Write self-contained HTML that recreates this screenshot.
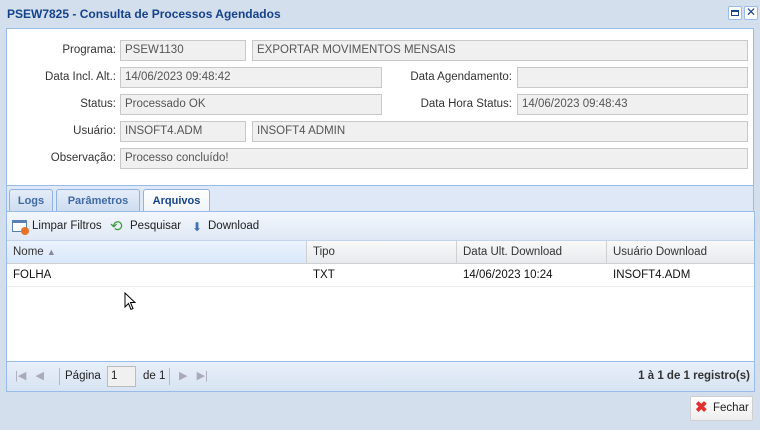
<!DOCTYPE html>
<html><head><meta charset="utf-8"><style>
*{box-sizing:border-box;margin:0;padding:0}
body{width:760px;height:430px;overflow:hidden;background:#d3dfec;font-family:"Liberation Sans",sans-serif;font-size:11.5px;color:#222;position:relative}
.a{position:absolute}
.title{left:7px;top:7px;font-weight:bold;color:#15428b;font-size:12px}
.tb{width:14px;height:14px;border:1px solid #99bbe8;background:#fff;border-radius:2px;top:6px}
.form{left:6px;top:28px;width:748px;height:157px;background:#fff;border:1px solid #99bbe8;border-bottom:none}
.lbl{text-align:right;color:#333}
.in{background:#f0f0f0;border:1px solid #c8c8c8;height:21px;padding:3px 4px;color:#555;white-space:nowrap;overflow:hidden}
.tabs{left:6px;top:185px;width:748px;height:27px;background:#dfe8f6;border:1px solid #99bbe8}
.tab{top:3px;height:23px;border:1px solid #8db2e3;border-bottom:none;border-radius:3px 3px 0 0;background:linear-gradient(#e5edf8,#cddcf0);font-weight:bold;color:#416aa3;padding:5px 0 0;text-align:center;font-size:11px}
.tab.act{background:linear-gradient(#fff,#eef3fa);color:#15428b;height:24px}
.grid{left:6px;top:211px;width:749px;height:181px;background:#fff;border:1px solid #99bbe8}
.tool{left:0;top:0;width:747px;height:29px;background:linear-gradient(#f3f7fc,#dfe8f5);border-bottom:1px solid #c3d5ee}
.hd{top:29px;height:23px;background:linear-gradient(#f9f9f9,#e7eaee);border-bottom:1px solid #d0d0d0;padding:5px 6px;border-right:1px solid #d0d0d0;color:#333}
.cell{top:53px;height:22px;padding:4px 6px;color:#111}
.pg{left:0;top:149px;width:747px;height:30px;background:linear-gradient(#e8eff8,#d8e4f3);border-top:1px solid #99bbe8}
</style></head><body>
<div class="a title">PSEW7825 - Consulta de Processos Agendados</div>
<div class="a tb" style="left:728px"><div style="margin:3px 2px;width:8px;height:6px;border:1px solid #15428b;border-top-width:2px"></div></div>
<div class="a tb" style="left:744px;font-size:12px;line-height:11px;text-align:center;color:#15428b">✕</div>
<div class="a form"></div>
<div class="a lbl" style="left:10px;top:44px;width:106px">Programa:</div>
<div class="a in" style="left:120px;top:40px;width:126px">PSEW1130</div>
<div class="a in" style="left:252px;top:40px;width:496px">EXPORTAR MOVIMENTOS MENSAIS</div>
<div class="a lbl" style="left:10px;top:71px;width:106px">Data Incl. Alt.:</div>
<div class="a in" style="left:120px;top:67px;width:262px">14/06/2023 09:48:42</div>
<div class="a lbl" style="left:390px;top:71px;width:122px">Data Agendamento:</div>
<div class="a in" style="left:517px;top:67px;width:231px"></div>
<div class="a lbl" style="left:10px;top:98px;width:106px">Status:</div>
<div class="a in" style="left:120px;top:94px;width:262px">Processado OK</div>
<div class="a lbl" style="left:390px;top:98px;width:122px">Data Hora Status:</div>
<div class="a in" style="left:517px;top:94px;width:231px">14/06/2023 09:48:43</div>
<div class="a lbl" style="left:10px;top:125px;width:106px">Usuário:</div>
<div class="a in" style="left:120px;top:121px;width:126px">INSOFT4.ADM</div>
<div class="a in" style="left:252px;top:121px;width:496px">INSOFT4 ADMIN</div>
<div class="a lbl" style="left:10px;top:152px;width:106px">Observação:</div>
<div class="a in" style="left:120px;top:148px;width:628px">Processo concluído!</div>
<div class="a tabs">
<div class="a tab" style="left:2px;width:44px">Logs</div>
<div class="a tab" style="left:49px;width:84px">Parâmetros</div>
<div class="a tab act" style="left:136px;width:67px">Arquivos</div>
</div>
<div class="a grid">
<div class="a tool">
<div class="a" style="left:5px;top:8px;width:15px;height:12px;border:1px solid #5a7fb5;border-top-width:3px;background:#fff"></div>
<div class="a" style="left:14px;top:15px;width:8px;height:8px;border-radius:50%;background:#e8702a"></div>
<div class="a" style="left:25px;top:8px">Limpar Filtros</div>
<div class="a" style="left:103px;top:5px;color:#3a9a3a;font-size:15px">⟲</div>
<div class="a" style="left:123px;top:8px">Pesquisar</div>
<div class="a" style="left:185px;top:8px;color:#3d6fb6;font-size:12px">⬇</div>
<div class="a" style="left:201px;top:8px">Download</div>
</div>
<div class="a hd" style="left:0;width:300px;background:linear-gradient(#ebf3fd,#d9e8fb)">Nome <span style="color:#889;font-size:9px">▲</span></div>
<div class="a hd" style="left:300px;width:150px">Tipo</div>
<div class="a hd" style="left:450px;width:150px">Data Ult. Download</div>
<div class="a hd" style="left:600px;width:147px;border-right:none">Usuário Download</div>
<div class="a" style="left:0;top:53px;width:747px;height:22px;border-bottom:1px solid #ededed"></div>
<div class="a cell" style="left:0">FOLHA</div>
<div class="a cell" style="left:300px">TXT</div>
<div class="a cell" style="left:450px">14/06/2023 10:24</div>
<div class="a cell" style="left:600px">INSOFT4.ADM</div>
<div class="a pg">
<div class="a" style="left:8px;top:7px;color:#aab;font-size:11px">|◀ &nbsp; ◀</div>
<div class="a" style="left:52px;top:6px;width:1px;height:17px;background:#aabbd4"></div>
<div class="a" style="left:58px;top:8px">Página</div>
<div class="a" style="left:100px;top:4px;width:29px;height:21px;background:#f0f0f0;border:1px solid #bbb;padding:3px 3px">1</div>
<div class="a" style="left:136px;top:8px">de 1</div>
<div class="a" style="left:162px;top:6px;width:1px;height:17px;background:#aabbd4"></div>
<div class="a" style="left:172px;top:7px;color:#aab;font-size:11px">▶ &nbsp; ▶|</div>
<div class="a" style="right:4px;top:8px;font-weight:bold;color:#333">1 à 1 de 1 registro(s)</div>
</div>
</div>
<div class="a" style="left:690px;top:396px;width:63px;height:25px;background:linear-gradient(#fff,#eee);border:1px solid #d0d0d0;border-radius:2px"></div>
<div class="a" style="left:695px;top:398px;color:#e03030;font-weight:bold;font-size:15px">✖</div>
<div class="a" style="left:713px;top:402px">Fechar</div>
<svg class="a" style="left:124px;top:292px" width="14" height="20" viewBox="0 0 14 20"><path d="M1 1 L1 15 L4.5 11.5 L7 17.5 L9 16.5 L6.5 10.5 L11 10.5 Z" fill="#fff" stroke="#000" stroke-width="1"/></svg>
</body></html>
